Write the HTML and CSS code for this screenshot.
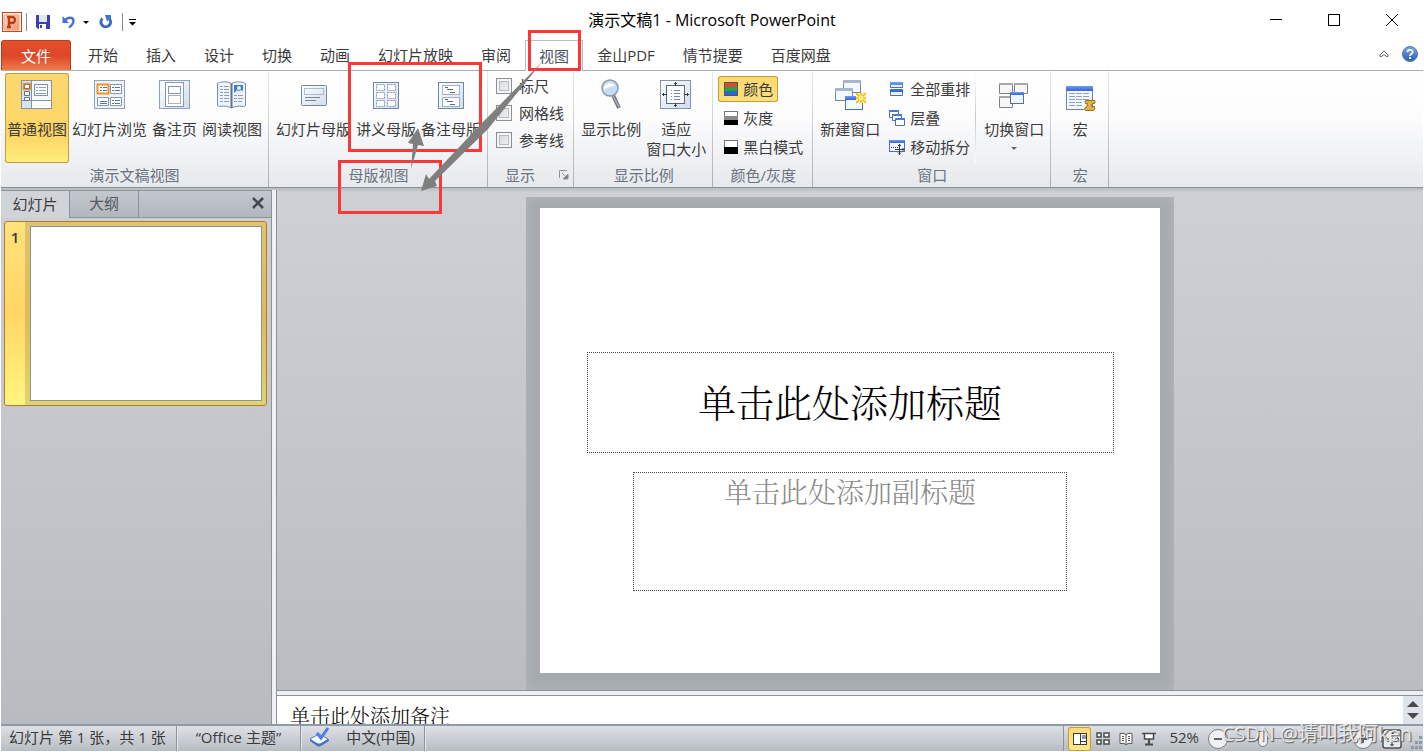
FILE: index.html
```html
<!DOCTYPE html>
<html lang="zh-CN">
<head>
<meta charset="utf-8">
<title>演示文稿1 - Microsoft PowerPoint</title>
<link rel="stylesheet" href="styles.css">
</head>
<body>
<svg class="defs" width="0" height="0" aria-hidden="true">
  <defs>
    <linearGradient id="page" x1="0" y1="0" x2="1" y2="1"><stop offset="0" stop-color="#fff"/><stop offset="1" stop-color="#d3dcea"/></linearGradient>
    <linearGradient id="bar" x1="0" y1="0" x2="0" y2="1"><stop offset="0" stop-color="#6d9cf0"/><stop offset="1" stop-color="#2f66d6"/></linearGradient>
    <linearGradient id="red" x1="0" y1="0" x2="1" y2="1"><stop offset="0" stop-color="#fbe0d3"/><stop offset="1" stop-color="#ee9468"/></linearGradient>
    <linearGradient id="ball" x1="0" y1="0" x2="0" y2="1"><stop offset="0" stop-color="#7ba6e8"/><stop offset="1" stop-color="#2a5cb8"/></linearGradient>
  </defs>
</svg>

<header class="titlebar">
  <div class="quick">
    <svg width="20" height="20" viewBox="0 0 20 20"><rect x=".5" y=".5" width="19" height="19" fill="#fbeee8" stroke="#c8461d"/><rect x="2" y="3" width="15" height="15" rx="1" fill="url(#red)" stroke="#e9a88c"/><path d="M5 15h4M7 15V5M5 5h5a3 3 0 0 1 0 6H7" fill="none" stroke="#c43a10" stroke-width="2.400"/></svg>
    <span class="rule"></span>
    <button class="q save" aria-label="保存"><svg width="14" height="14" viewBox="0 0 14 14"><path d="M0 0h14v14H2l-2-2z" fill="#3e3fae"/><rect x="3" y="0" width="8" height="7" fill="#dfe7f6"/><rect x="3" y="9" width="7" height="5" fill="#fff"/><rect x="4" y="10" width="2" height="3" fill="#3e3fae"/></svg></button>
    <button class="q undo" aria-label="撤消"><svg width="14" height="14" viewBox="0 0 14 14"><path d="M3 5.500C6 1.500 11.500 2 11.500 6c0 3-2 4.500-4.500 6.500" fill="none" stroke="#3f74cf" stroke-width="2.400"/><path d="M.5 1v7h6.500z" fill="#3f74cf"/></svg></button>
    <button class="q caret" aria-label="撤消列表"><svg width="6" height="3" viewBox="0 0 6 3"><path d="M0 0h6L3 3z"/></svg></button>
    <button class="q redo" aria-label="恢复"><svg width="14" height="14" viewBox="0 0 14 14"><path d="M3.500 3.500A4.800 4.800 0 1 0 10.500 4" fill="none" stroke="#3567c5" stroke-width="3"/><path d="M6 0h6v6l-2-1.500L8 6.500z" fill="#3f74cf"/></svg></button>
    <span class="rule"></span>
    <button class="q more" aria-label="自定义快速访问工具栏"><svg width="7" height="7" viewBox="0 0 7 7"><path d="M0 0h7v1H0zM0 3h7L3.500 6.500z"/></svg></button>
  </div>
  <div class="caption">演示文稿1 - Microsoft PowerPoint</div>
  <div class="winctl">
    <button aria-label="最小化"><svg width="12" height="12"><path d="M0 5.500h12" stroke="#000"/></svg></button>
    <button aria-label="最大化"><svg width="12" height="12"><rect x=".5" y=".5" width="11" height="11" fill="none" stroke="#000"/></svg></button>
    <button aria-label="关闭"><svg width="12" height="12"><path d="M0 0l12 12M12 0L0 12" stroke="#000"/></svg></button>
  </div>
</header>

<nav class="tabs">
  <button class="file">文件</button>
  <button>开始</button><button>插入</button><button>设计</button><button>切换</button><button>动画</button><button>幻灯片放映</button><button>审阅</button><button class="on">视图</button><button>金山PDF</button><button>情节提要</button><button>百度网盘</button>
  <span class="tabs-end">
    <button aria-label="折叠功能区"><svg width="10" height="8" viewBox="0 0 10 8"><path d="M5 1L1 5v1.500h1.500L5 4.500l2.500 2H9V5z" fill="#fff" stroke="#5a6068"/></svg></button>
    <button aria-label="帮助"><svg width="16" height="16" viewBox="0 0 16 16"><circle cx="8" cy="8" r="7.500" fill="url(#ball)" stroke="#4a76c0"/><path d="M5.500 6.300c0-3.400 5.200-3.200 5.200-.3 0 1.900-2.600 1.800-2.600 3.900" fill="none" stroke="#fff" stroke-width="1.800"/><rect x="7" y="11" width="2" height="2" fill="#fff"/></svg></button>
  </span>
</nav>

<section class="ribbon">
  <div class="group">
    <div class="cmds">
      <button class="big hot"><svg width="32" height="32" viewBox="0 0 32 32"><rect x=".5" y="1.500" width="30" height="28" fill="#f5f8fc" stroke="#7f94b0"/><rect x="1" y="2" width="9" height="27" fill="#d9e2ee"/><path d="M1 21.500h29M10.500 2v27" stroke="#7f94b0"/><rect x="11" y="22" width="19" height="7" fill="#fff"/><rect x="3.500" y="5.500" width="5" height="4" fill="#fff" stroke="#5c7392"/><rect x="2.500" y="4.500" width="7" height="6" fill="none" stroke="#f0902d" stroke-width="1.500"/><path d="M3.500 12.500h5v4h-5zM3.500 18.500h5v3h-5z" fill="#fff" stroke="#5c7392"/><rect x="13.500" y="5.500" width="13" height="11" fill="#fff" stroke="#7f94b0"/><path d="M15 8.500h2M18 8.500h7M15 11.500h2M18 11.500h7M15 14.500h10" stroke="#8fa2bd"/></svg><span>普通视图</span></button>
      <button class="big"><svg width="32" height="32" viewBox="0 0 32 32"><rect x=".5" y="1.500" width="30" height="28" fill="#eef3f9" stroke="#8fa2bb"/><path d="M16.500 5.500h11v9h-11zM3.500 18.500h11v8h-11zM16.500 18.500h11v8h-11z" fill="#fff" stroke="#8398b5"/><rect x="3.500" y="5.500" width="11" height="9" fill="#fff" stroke="#f0902d" stroke-width="2"/><path d="M6 8.500h2M9 8.500h4M6 11.500h2M9 11.500h4M18 8.500h2M21 8.500h5M18 11.500h2M21 11.500h5M6 22.500h7M6 24.500h7M18 21.500h2M21 21.500h5M18 24.500h2M21 24.500h5" stroke="#5c7392"/></svg><span>幻灯片浏览</span></button>
      <button class="big"><svg width="32" height="32" viewBox="0 0 32 32"><rect x=".5" y="1.500" width="30" height="28" fill="url(#page)" stroke="#8fa2bb"/><rect x="6.500" y="3.500" width="18" height="24" fill="#fff" stroke="#8398b5"/><rect x="9.500" y="7.500" width="12" height="7" fill="#fff" stroke="#8398b5"/><rect x="9.500" y="16.500" width="12" height="8" fill="none" stroke="#4c5f7a" stroke-dasharray="1 1"/></svg><span>备注页</span></button>
      <button class="big"><svg width="32" height="32" viewBox="0 0 32 32"><path d="M1.500 4.500l2-1c4-1 9-1 12 1 3-2 8-2 12-1l2 1v22l-2 1c-5-1-9 0-12 1.500-3-1.500-7-2.500-12-1.500l-2-1z" fill="#eef3fa" stroke="#7b8ea8"/><path d="M15.500 4.500V29" stroke="#5c7392" stroke-width="2"/><path d="M4 7.500h3m1 0h5M4 10.500h3m1 0h5M4 13.500h3m1 0h5M4 16.500h3m1 0h5M4 19.500h3m1 0h5M4 22.500h3m1 0h5M18 16.500h3m1 0h5M18 19.500h3m1 0h5M18 22.500h3m1 0h4" stroke="#8a9db8"/><rect x="18" y="6" width="9" height="8" fill="#3f7fd0"/><path d="M18 14l3-3 2 1 2-1 2 1v2z" fill="#dfe9f5"/><circle cx="23" cy="9" r="2" fill="#fbe9b0"/></svg><span>阅读视图</span></button>
    </div>
    <div class="name">演示文稿视图</div>
  </div>

  <div class="group">
    <div class="cmds">
      <button class="big"><svg width="32" height="32" viewBox="0 0 32 32"><rect x="3.500" y="6.500" width="25" height="20" rx="1" fill="url(#page)" stroke="#6f86a6"/><rect x="6.500" y="9.500" width="19" height="6" fill="none" stroke="#6f86a6" stroke-dasharray="1 1"/><path d="M7 18.500h15M7 21.500h11" stroke="#6f86a6"/></svg><span>幻灯片母版</span></button>
      <button class="big"><svg width="32" height="32" viewBox="0 0 32 32"><rect x="3.500" y="3.500" width="25" height="26" fill="url(#page)" stroke="#6f86a6"/><path d="M6.500 5.500h8v6h-8zM17.500 5.500h8v6h-8zM6.500 13.500h8v6h-8zM17.500 13.500h8v6h-8zM6.500 21.500h8v6h-8zM17.500 21.500h8v6h-8z" fill="#fff" stroke="#8297b5" stroke-dasharray="2 1"/></svg><span>讲义母版</span></button>
      <button class="big"><svg width="32" height="32" viewBox="0 0 32 32"><rect x="3.500" y="3.500" width="25" height="26" fill="url(#page)" stroke="#6f86a6"/><path d="M7.500 6.500h17v9h-17zM7.500 18.500h17v9h-17z" fill="#fff" stroke="#52698a" stroke-dasharray="1 1"/><path d="M10 8.500h3M12 10.500h6M15 13.500h5M10 20.500h3M12 22.500h6M15 25.500h5" stroke="#52698a"/></svg><span>备注母版</span></button>
    </div>
    <div class="name">母版视图</div>
  </div>

  <div class="group show">
    <div class="cmds checks">
      <label><input type="checkbox">标尺</label>
      <label><input type="checkbox">网格线</label>
      <label><input type="checkbox">参考线</label>
    </div>
    <div class="name">显示<button class="launch" aria-label="显示设置"><svg width="10" height="10" viewBox="0 0 10 10"><path d="M.5 8V.5H8" fill="none" stroke="#8d939c"/><path d="M3 3l4 4M9 4v5H4z" fill="#7b818a" stroke="#8d939c"/></svg></button></div>
  </div>

  <div class="group">
    <div class="cmds">
      <button class="big"><svg width="32" height="32" viewBox="0 0 32 32"><path d="M18 16l6 13" stroke="#777d86" stroke-width="4"/><path d="M18 17l6 11" stroke="#c3c7cd" stroke-width="1"/><circle cx="15" cy="9" r="8" fill="#c6ddf3" stroke="#8798ae" stroke-width="1.500"/><path d="M9 9c1-6 10-6 11-2-3 0-7 1-11 4z" fill="#fff"/></svg><span>显示比例</span></button>
      <button class="big"><svg width="32" height="32" viewBox="0 0 32 32"><rect x=".5" y="1.500" width="30" height="28" fill="url(#page)" stroke="#7f94b0"/><rect x="6.500" y="6.500" width="18" height="18" fill="#fff" stroke="#52698a"/><path d="M11 11.500h1m2 0h6M11 14.500h1m2 0h6M11 17.500h1m2 0h6M11 20.500h1m2 0h6" stroke="#6c88c4"/><path d="M15.500 3v4M14 5l1.500-1.500L17 5M15.500 24v4M14 26l1.500 1.500L17 26M2 15.500h5M4 14l-1.500 1.500L4 17M24 15.500h5M27 14l1.500 1.500L27 17" fill="none" stroke="#333c48"/></svg><span>适应<br>窗口大小</span></button>
    </div>
    <div class="name">显示比例</div>
  </div>

  <div class="group">
    <div class="cmds stack">
      <button class="small hot"><svg width="14" height="14" viewBox="0 0 14 14"><rect width="14" height="14" fill="#555"/><rect x="1" y="1" width="12" height="4" fill="#e0443a"/><rect x="1" y="5" width="12" height="4" fill="#1faa38"/><rect x="1" y="9" width="12" height="4" fill="#2f63d8"/></svg>颜色</button>
      <button class="small"><svg width="14" height="14" viewBox="0 0 14 14"><rect x=".5" y=".5" width="13" height="13" fill="#fff" stroke="#777"/><rect y="5" width="14" height="4" fill="#8a8a8a"/><rect y="9" width="14" height="5"/></svg>灰度</button>
      <button class="small"><svg width="14" height="14" viewBox="0 0 14 14"><rect x=".5" y=".5" width="13" height="13" fill="#fff" stroke="#777"/><rect y="7" width="14" height="7"/></svg>黑白模式</button>
    </div>
    <div class="name">颜色/灰度</div>
  </div>

  <div class="group">
    <div class="cmds">
      <button class="big"><svg width="32" height="32" viewBox="0 0 32 32"><rect x="9.500" y="1.500" width="17" height="12" fill="#f4f7fb" stroke="#77889e"/><rect x="9" y="1" width="18" height="3" fill="#a9b7cc"/><rect x="1.500" y="9.500" width="17" height="12" fill="#f4f7fb" stroke="#77889e"/><rect x="1" y="9" width="18" height="3" fill="#a9b7cc"/><rect x="11.500" y="17.500" width="17" height="13" fill="#f4f8fe" stroke="#51709f"/><rect x="11" y="17" width="18" height="4" fill="url(#bar)"/><rect x="22" y="14" width="10" height="10" fill="#fff3a0"/><path d="M22 14l10 10M32 14L22 24M27 14v10M22 19h10" stroke="#f0b41c" stroke-width="1.500"/><circle cx="27" cy="19" r="2.500" fill="#fff27a"/></svg><span>新建窗口</span></button>
      <div class="stack arrange">
        <button class="small"><svg width="16" height="16" viewBox="0 0 16 16"><path d="M1.500 1.500h12v5h-12zM1.500 8.500h12v6h-12z" fill="#eaf1fb" stroke="#51709f"/><path d="M1 1h13v3H1zM1 8h13v3H1z" fill="url(#bar)"/></svg>全部重排</button>
        <button class="small"><svg width="16" height="16" viewBox="0 0 16 16"><path d="M.5.500h9v7h-9z" fill="#fff" stroke="#51709f"/><path d="M0 0h10v2H0z" fill="#4d79cf"/><path d="M3.500 4.500h9v6h-9z" fill="#fff" stroke="#51709f"/><path d="M3 4h10v2H3z" fill="#4d79cf"/><path d="M6.500 8.500h9v7h-9z" fill="#fff" stroke="#51709f"/><path d="M6 8h10v2H6z" fill="#4d79cf"/></svg>层叠</button>
        <button class="small"><svg width="16" height="16" viewBox="0 0 16 16"><rect x=".5" y="1.500" width="15" height="11" fill="#f4f8fe" stroke="#51709f"/><path d="M0 1h16v3H0z" fill="url(#bar)"/><path d="M2 8.500h8" stroke="#333c48" stroke-dasharray="1 1"/><path d="M10.500 5v11M9 7l1.500-1.500L12 7M9 13.500l1.500 1.500 1.500-1.500M6 10.500h9M13.500 9l1.500 1.500-1.500 1.500" fill="none" stroke="#2f3947"/></svg>移动拆分</button>
      </div>
      <button class="big"><svg width="32" height="32" viewBox="0 0 32 32"><path d="M1.500 4.500h13v10h-13zM16.500 4.500h13v10h-13zM1.500 17.500h13v11h-13z" fill="#f7f7f7" stroke="#808080"/><path d="M1 4h14v2H1zM16 4h14v2H16zM1 17h14v2H1z" fill="#a8a8a8"/><rect x="12.500" y="13.500" width="13" height="11" fill="#eef4fd" stroke="#51709f"/><path d="M12 13h14v3H12z" fill="url(#bar)"/></svg><span>切换窗口</span><svg class="drop" width="6" height="4" viewBox="0 0 6 4"><path d="M0 0h6L3 3z" fill="#666"/></svg></button>
    </div>
    <div class="name">窗口</div>
  </div>

  <div class="group macro">
    <div class="cmds">
      <button class="big"><svg width="32" height="32" viewBox="0 0 32 32"><rect x="2.500" y="7.500" width="26" height="23" fill="#f4f8fe" stroke="#6a84ab"/><path d="M2 7h27v5H2z" fill="url(#bar)"/><path d="M5 14.500h6m1 0h6m1 0h6M5 17.500h6m1 0h6m1 0h6M5 20.500h6m1 0h6m1 0h6M5 23.500h6m1 0h6M5 26.500h6m1 0h6" stroke="#8aa0c4"/><path d="M21.500 21.500h9q1.500 1 0 3h-2l-1 3h3q1 3-1 4h-8q-2-1 0-3h1l1-4h-2q-1-2 0-3z" fill="#e0b04a" stroke="#98701a"/></svg><span>宏</span></button>
    </div>
    <div class="name">宏</div>
  </div>
</section>

<main class="work">
  <aside class="panel">
    <div class="ptabs">
      <button class="on">幻灯片</button><button>大纲</button>
      <button class="x" aria-label="关闭窗格"><svg width="12" height="12" viewBox="0 0 12 12"><path d="M1 1l10 10M11 1L1 11" stroke="#43484e" stroke-width="2.500"/></svg></button>
    </div>
    <button class="thumb" aria-label="幻灯片 1"><span class="num">1</span><span class="mount"><span class="mini"></span></span></button>
  </aside>
  <section class="editor">
    <div class="canvas">
      <div class="shade">
        <article class="slide">
          <h1>单击此处添加标题</h1>
          <p>单击此处添加副标题</p>
        </article>
      </div>
    </div>
    <div class="notes">
      <textarea aria-label="备注">单击此处添加备注</textarea>
      <div class="scroll">
        <button aria-label="向上"><svg width="12" height="6"><path d="M0 6h12L6 0z" fill="#4a4a4a"/></svg></button>
        <button aria-label="向下"><svg width="12" height="6"><path d="M0 0h12L6 6z" fill="#4a4a4a"/></svg></button>
      </div>
    </div>
  </section>
</main>

<footer class="status">
  <span class="cell count">幻灯片 第 1 张，共 1 张</span>
  <span class="cell theme">“Office 主题”</span>
  <span class="cell lang"><svg width="22" height="20" viewBox="0 0 22 20"><path d="M1 12l9-5 9 5-8 6q-2 1-4-1z" fill="#f4f7fd" stroke="#5c7cc0"/><path d="M1 12v2l7 5q2 1 4 0l8-5v-2l-8 4q-2 1-4 0z" fill="#4a70c0"/><path d="M8 6l4 5 7-10" fill="none" stroke="#4f7fdc" stroke-width="3"/></svg>中文(中国)</span>
  <div class="right">
    <button class="view hot" aria-label="普通视图"><svg width="14" height="12" viewBox="0 0 14 12"><rect x=".5" y=".5" width="13" height="11" fill="#fff" stroke="#3c3c3c"/><path d="M7.500 0v12" stroke="#3c3c3c"/><rect x="9" y="2" width="4" height="4" fill="#8a98ad"/><path d="M8 8.500h6" stroke="#3c3c3c"/></svg></button>
    <button class="view" aria-label="幻灯片浏览"><svg width="14" height="13" viewBox="0 0 14 13"><path d="M1 1h4v4H1zM8 1h5v4H8zM1 8h4v4H1zM8 8h5v4H8z" fill="#fff" stroke="#4a4a4a" stroke-width="1.500"/></svg></button>
    <button class="view" aria-label="阅读视图"><svg width="14" height="14" viewBox="0 0 14 14"><path d="M1 1.500q3-1 6 1 3-2 6-1v10q-3-1-6 1-3-2-6-1zM7 2.500v10" fill="#fff" stroke="#555"/><path d="M3 4.500h2M3 6.500h2M3 8.500h2M9 4.500h2M9 6.500h2M9 8.500h2" stroke="#555"/></svg></button>
    <button class="view" aria-label="幻灯片放映"><svg width="14" height="14" viewBox="0 0 14 14"><path d="M0 1.500h14M2.500 2v5h9V2" fill="#fff" stroke="#4a4a4a" stroke-width="1.500"/><path d="M7 7v5M3 12.500h8" stroke="#4a4a4a" stroke-width="2"/></svg></button>
    <span class="pct">52%</span>
    <button class="round" aria-label="缩小"><svg width="20" height="20" viewBox="0 0 20 20"><circle cx="10" cy="10" r="9.500" fill="#f0f1f3" stroke="#767c85"/><path d="M6 10h8" stroke="#60666e" stroke-width="2"/></svg></button>
    <input class="zoom" type="range" min="10" max="400" value="110" aria-label="显示比例">
    <button class="round" aria-label="放大"><svg width="20" height="20" viewBox="0 0 20 20"><circle cx="10" cy="10" r="9.500" fill="#f0f1f3" stroke="#767c85"/><path d="M6 10h8M10 6v8" stroke="#60666e" stroke-width="2"/></svg></button>
    <button class="round fit" aria-label="适应窗口"><svg width="20" height="20" viewBox="0 0 20 20"><rect x="1" y="1" width="18" height="18" rx="2" fill="#e8eaed" stroke="#4c5157" stroke-width="1.500"/><path d="M10 3v4M8.500 5L10 3l1.500 2M10 17v-4M8.500 15l1.500 2 1.500-2M3 10h4M5 8.500L3 10l2 1.500M17 10h-4M15 8.500l2 1.500-2 1.500" fill="none" stroke="#33373c"/></svg></button>
    <svg class="grip" width="12" height="14" viewBox="0 0 12 14"><path d="M9 0h3v3H9zM5 5h3v3H5zM9 5h3v3H9zM1 10h3v3H1zM5 10h3v3H5zM9 10h3v3H9z" fill="#8f98a3"/></svg>
  </div>
</footer>

<svg class="marks" width="620" height="220" viewBox="0 0 620 220" aria-hidden="true">
  <g fill="none" stroke="#fb3737" stroke-width="3"><rect x="529.500" y="31.500" width="50" height="38"/><rect x="349.500" y="63.500" width="131" height="87"/><rect x="339.500" y="161.500" width="101" height="51"/></g>
  <g fill="#7f7f7f"><path d="M542 62L488 129 435 181l2 5-16 5 5-17 3 5 52-55z"/><path d="M411 169l2-25-5-1 10-15 6 18-6-1z"/></g>
</svg>
<div class="stamp">CSDN @请叫我阿ken</div>
</body>
</html>
```
FILE: styles.css
```css
* { box-sizing: border-box; }

body {
  margin: 0;
  height: 100vh;
  padding: 0 1px 1px;
  display: flex;
  flex-direction: column;
  overflow: hidden;
  position: relative;
  background: #fff;
  color: #3b3b3b;
  font: 15px/20px "Open Sans", "Noto Sans CJK SC", sans-serif;
}

button {
  margin: 0;
  padding: 0;
  border: 0;
  background: none;
  color: inherit;
  font: inherit;
}

svg { display: block; flex: none; }
.defs { position: absolute; }

/* Title bar */
.titlebar {
  flex: none;
  height: 40px;
  display: grid;
  grid-template-columns: 1fr auto 1fr;
  align-items: center;
}
.quick { display: flex; align-items: center; padding: 4px 0 0 1px; }
.rule { width: 1px; height: 18px; margin: 0 4px; background: #8d8d8d; }
.save { margin: 0 12px 0 5px; }
.caret { margin: 0 10px 0 7px; }
.redo { margin-right: 5px; }
.more { margin-left: 2px; }
.caption { color: #000; font-size: 16px; white-space: nowrap; }
.winctl { display: flex; justify-content: flex-end; padding-right: 2px; }
.winctl button { width: 58px; height: 38px; display: grid; place-items: center; }

/* Ribbon tabs */
.tabs {
  flex: none;
  height: 31px;
  display: flex;
  border-bottom: 1px solid #a9aeb5;
}
.tabs > button { padding: 0 14px; white-space: nowrap; }
.tabs .file {
  width: 70px;
  margin-right: 3px;
  color: #fff;
  border: 1px solid #c1391a;
  border-bottom: 0;
  border-radius: 3px 3px 0 0;
  background: linear-gradient(#e4512c, #dd4628 50%, #f27a49);
}
.tabs .on {
  margin-bottom: -1px;
  background: #fff;
  box-shadow: inset 1px 1px #b9bcc1, inset -1px 0 #b9bcc1;
  color: #4a5468;
}
.tabs-end { margin-left: auto; display: flex; align-items: center; gap: 13px; padding: 0 5px 2px 0; }

/* Ribbon */
.ribbon {
  flex: none;
  display: flex;
  height: 117px;
  border-bottom: 1px solid #8b9097;
  background: linear-gradient(#fff, #fcfcfd 40%, #e6e9ed);
}
.group {
  display: flex;
  flex-direction: column;
  padding: 2px 4px 0 5px;
  border-right: 1px solid;
  border-image: linear-gradient(#e9ebee, #a9aeb5) 1;
}
.group:first-child { padding-left: 4px; }
.cmds { flex: 1; display: flex; gap: 1px; }
.big {
  display: flex;
  flex-direction: column;
  align-items: center;
  height: 90px;
  padding: 6px 2px 0;
  white-space: nowrap;
}
.big > span { margin-top: 8px; }
.drop { margin-top: 8px; }
.big.hot { background: linear-gradient(#fbd86f, #fdd565 70%, #fff07c); box-shadow: inset 0 0 0 1px #c79a3b; border-radius: 3px; }
.name { position: relative; height: 24px; line-height: 24px; text-align: center; color: #6a7280; }
.stack { display: flex; flex-direction: column; align-items: flex-start; gap: 3px; padding-top: 3px; }
.small { display: flex; align-items: center; gap: 5px; height: 26px; padding: 0 5px 0 6px; white-space: nowrap; }
.small.hot { background: linear-gradient(#fbd86f, #fce07c); box-shadow: inset 0 0 0 1px #c79a3b; border-radius: 3px; }
.arrange { margin-right: 5px; border-right: 1px solid; border-image: linear-gradient(#fff, #c3c8ce 50%, #fff) 1; }
.checks { flex-direction: column; gap: 0; padding: 0 5px 0 3px; }
.checks label { display: flex; align-items: center; gap: 7px; height: 27px; padding-bottom: 2px; }
.checks input {
  appearance: none;
  width: 16px;
  height: 16px;
  margin: 0;
  border: 1px solid #8e8f8f;
  background: linear-gradient(135deg, #d3d5d8, #f5f5f6);
  box-shadow: inset 0 0 0 2px #f3f4f5, inset 0 0 0 3px #b8bcc2;
}
.show .name { padding-right: 22px; }
.launch { position: absolute; right: 0; top: 7px; }
.macro .cmds { justify-content: center; padding: 0 6px; }

/* Workspace */
.work {
  flex: 1;
  min-height: 0;
  display: grid;
  grid-template-columns: 271px 1fr;
  column-gap: 4px;
  padding-top: 2px;
  background: linear-gradient(#b5bac0, #cdd1d6 4px, #b8bcc1);
}
.panel { border-right: 1px solid #8b929b; border-top: 1px solid #8b929b; }
.ptabs {
  display: flex;
  height: 27px;
  border-bottom: 1px solid #8b929b;
  background: linear-gradient(#c3c8ce, #b2b7bd);
}
.ptabs button { width: 69px; padding-bottom: 2px; border-right: 1px solid #8b929b; color: #55595f; }
.ptabs .on { margin-bottom: -1px; background: #d0d4d9; color: #3b3b3b; }
.ptabs .x { width: auto; margin-left: auto; padding-right: 7px; border: 0; }
.thumb {
  display: flex;
  width: calc(100% - 7px);
  margin: 3px 4px 0 3px;
  border: 1px solid #b57b2b;
  border-radius: 3px;
  overflow: hidden;
  background: linear-gradient(#ffe27a, #ffd666 50%, #fff57f);
}
.num { width: 20px; padding-top: 5px; font-weight: 600; text-align: center; }
.mount { flex: 1; padding: 4px 4px 4px 5px; background: rgba(70, 60, 50, .18); }
.mini { display: block; aspect-ratio: 233 / 176; border: 1px solid #8b929b; background: #fff; }

.editor {
  min-width: 0;
  min-height: 0;
  display: flex;
  flex-direction: column;
  border-left: 1px solid #8b929b;
  box-shadow: -4px 0 #f0f1f5;
}
.canvas { flex: 1; min-height: 0; padding-top: 7px; display: flex; justify-content: center; border-bottom: 1px solid #8b929b; }
.shade { height: 100%; padding: 11px 14px 17px; background: #a5aaaf; box-shadow: inset 0 0 10px 2px #b0b4b9; }
.slide {
  height: 100%;
  aspect-ratio: 4 / 3;
  display: grid;
  grid-template-rows: 144fr 101fr 19fr 119fr 82fr;
  background: #fff;
  font-family: "Noto Serif CJK SC", "Noto Sans CJK SC", serif;
  font-weight: 300;
}
.slide h1, .slide p { margin: 0; border: 1px dotted #444; text-align: center; }
.slide h1 { grid-row: 2; width: 85%; padding-bottom: 4px; justify-self: center; display: grid; place-items: center; color: #000; font-size: 38px; line-height: 48px; font-weight: 300; }
.slide p { grid-row: 4; width: 70%; justify-self: center; color: #8b8b8b; font-size: 28px; line-height: 36px; }
.notes { flex: none; display: flex; height: 33px; border-top: 4px solid #eff0f4; background: #fff; box-shadow: inset 0 1px #8b929b; }
.notes textarea {
  flex: 1;
  height: 29px;
  padding: 7px 13px 0;
  border: 0;
  resize: none;
  overflow: hidden;
  background: none;
  color: #000;
  font: 300 20px/28px "Noto Serif CJK SC", "Noto Sans CJK SC", serif;
}
.scroll { width: 20px; margin-top: 1px; display: flex; flex-direction: column; justify-content: space-evenly; align-items: center; background: #dfe3eb; }

/* Status bar */
.status {
  flex: none;
  height: 27px;
  display: flex;
  align-items: center;
  border-top: 2px solid #8f9aa6;
  background: linear-gradient(#dde1e6, #b8bdc4);
  white-space: nowrap;
}
.cell { display: flex; align-items: center; height: 100%; padding: 0 9px 3px 8px; border-right: 1px solid #8b929b; box-shadow: 1px 0 #e6e8eb; }
.count { padding-right: 10px; }
.theme { padding-left: 19px; padding-right: 19px; }
.lang { gap: 15px; }
.right { margin-left: auto; height: 100%; display: flex; align-items: center; padding-left: 4px; border-left: 1px solid #8b929b; }
.view { width: 23px; height: 24px; display: grid; place-items: center; }
.view.hot { background: linear-gradient(#ffd970, #ffe88a); box-shadow: inset 0 0 0 1px #c79a3b; border-radius: 3px; }
.pct { margin: 0 9px 0 9px; padding-bottom: 3px; }
.zoom { width: 121px; height: 20px; margin: 0 2px; appearance: none; background: linear-gradient(#7c838c, #7c838c) center / 100% 1px no-repeat; }
.zoom::-webkit-slider-thumb {
  appearance: none;
  width: 10px;
  height: 16px;
  background: #eef0f2;
  border: 1px solid #767c85;
  border-radius: 2px 2px 5px 5px;
}
.fit { margin-left: 9px; }
.grip { margin: 8px 1px 0 8px; }

/* Layers over the window */
.marks { position: absolute; left: 0; top: 0; pointer-events: none; }
.stamp {
  position: absolute;
  right: 12px;
  bottom: 4px;
  color: rgba(240, 241, 243, .9);
  font-size: 20px;
  line-height: 28px;
  text-shadow: 1px 1px 1px #555;
  pointer-events: none;
}
```
